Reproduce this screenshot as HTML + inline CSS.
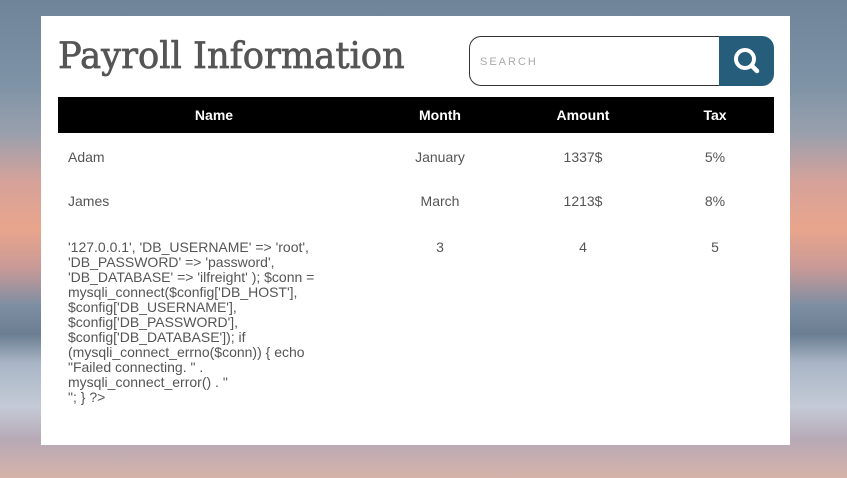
<!DOCTYPE html>
<html><head><meta charset="utf-8"><style>
html,body{margin:0;padding:0;}
body{width:847px;height:478px;overflow:hidden;position:relative;font-family:"Liberation Sans",Arial,sans-serif;
background:linear-gradient(180deg,#6f8499 0%,#7e93a6 18%,#9aa0ad 28%,#d6a29a 38%,#e9a58c 48%,#c99a97 56%,#7d8ea3 64%,#6c7e92 70%,#a9b6c6 76%,#c4cad6 85%,#b7a9b6 92%,#d6b3aa 100%);}
.card{position:absolute;left:41px;top:16px;width:749px;height:429px;background:#fff;}
h1{position:absolute;left:17px;top:20px;margin:0;font-family:"DejaVu Serif","Liberation Serif",serif;font-weight:normal;font-size:36px;color:#555;-webkit-text-stroke:0.7px #555;transform:scaleX(0.98);transform-origin:left;}
.search{position:absolute;left:428px;top:20px;width:249px;height:48px;border:1px solid #333;border-right:none;border-radius:12px 0 0 12px;}
.search span{position:absolute;left:10px;top:19px;font-size:11px;letter-spacing:2px;color:#aaa;}
.btn{position:absolute;left:678px;top:20px;width:55px;height:50px;background:#255d7a;border-radius:0 12px 12px 0;}
table{position:absolute;left:17px;top:81px;width:716px;border-collapse:collapse;font-size:14px;color:#555;}
th{background:#000;color:#fff;font-weight:bold;height:36px;padding:0;font-size:14px;}
td{padding:0;vertical-align:top;text-align:center;line-height:15px;}
td.n{text-align:left;padding-left:10px;}
tr.r td{height:45px;padding-top:16px;box-sizing:border-box;}
tr.r1 td{padding-top:17px;height:45px;}
tr.r3 td{padding-top:17px;}
</style></head><body>
<div class="card">
<h1>Payroll Information</h1>
<div class="search"><span>SEARCH</span></div>
<div class="btn"><svg width="55" height="50" viewBox="0 0 55 50"><circle cx="26" cy="23" r="9" fill="none" stroke="#fff" stroke-width="4"/><line x1="32.5" y1="29.5" x2="38" y2="35" stroke="#fff" stroke-width="4.5" stroke-linecap="round"/></svg></div>
<table>
<tr><th style="width:312px">Name</th><th style="width:140px">Month</th><th style="width:146px">Amount</th><th>Tax</th></tr>
<tr class="r r1"><td class="n">Adam</td><td>January</td><td>1337$</td><td>5%</td></tr>
<tr class="r"><td class="n">James</td><td>March</td><td>1213$</td><td>8%</td></tr>
<tr class="r r3"><td class="n"><div style="width:275px">'127.0.0.1', 'DB_USERNAME' =&gt; 'root', 'DB_PASSWORD' =&gt; 'password', 'DB_DATABASE' =&gt; 'ilfreight' ); $conn = mysqli_connect($config['DB_HOST'], $config['DB_USERNAME'], $config['DB_PASSWORD'], $config['DB_DATABASE']); if (mysqli_connect_errno($conn)) { echo "Failed connecting. " . mysqli_connect_error() . "<br>"; } ?&gt;</div></td><td>3</td><td>4</td><td>5</td></tr>
</table>
</div>
</body></html>
